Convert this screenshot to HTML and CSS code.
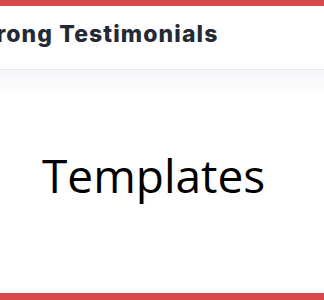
FILE: index.html
```html
<!DOCTYPE html>
<html lang="en">
<head>
    <meta charset="UTF-8">
    <meta name="viewport" content="width=device-width, initial-scale=1.0">
    <title>Templates</title>
    <link rel="stylesheet" href="styles.css">
</head>
<body>
    <div class="frame">
        <header class="site-header">
            <h1 class="site-title">Strong Testimonials</h1>
        </header>
        <main class="content">
            <h2 class="page-title">Templates</h2>
        </main>
    </div>
</body>
</html>
```

FILE: styles.css
```css
html, body {
    margin: 0;
    padding: 0;
    background-color: #ffffff;
}
.frame {
    height: 300px;
    box-sizing: border-box;
    border-top: 6px solid #d9484a;
    border-bottom: 7px solid #d9484a;
    display: flex;
    flex-direction: column;
    overflow: hidden;
}
.site-header {
    height: 64px;
    box-sizing: border-box;
    padding-bottom: 6px;
    flex-shrink: 0;
    display: flex;
    align-items: center;
    border-bottom: 1px solid #e3e6ea;
    overflow: hidden;
}
.site-title {
    margin: 0 0 0 -30px;
    font-family: Inter, "Noto Sans", sans-serif;
    font-weight: 800;
    font-size: 23px;
    letter-spacing: 1.1px;
    line-height: 1;
    color: #242a35;
    white-space: nowrap;
}
.content {
    flex: 1;
    background: linear-gradient(#f4f6f9, #ffffff 26px);
    padding-left: 42px;
}
.page-title {
    margin: 82px 0 0 0;
    font-family: "Open Sans", sans-serif;
    font-weight: 400;
    font-size: 46px;
    line-height: 1;
    color: #000000;
}
```
